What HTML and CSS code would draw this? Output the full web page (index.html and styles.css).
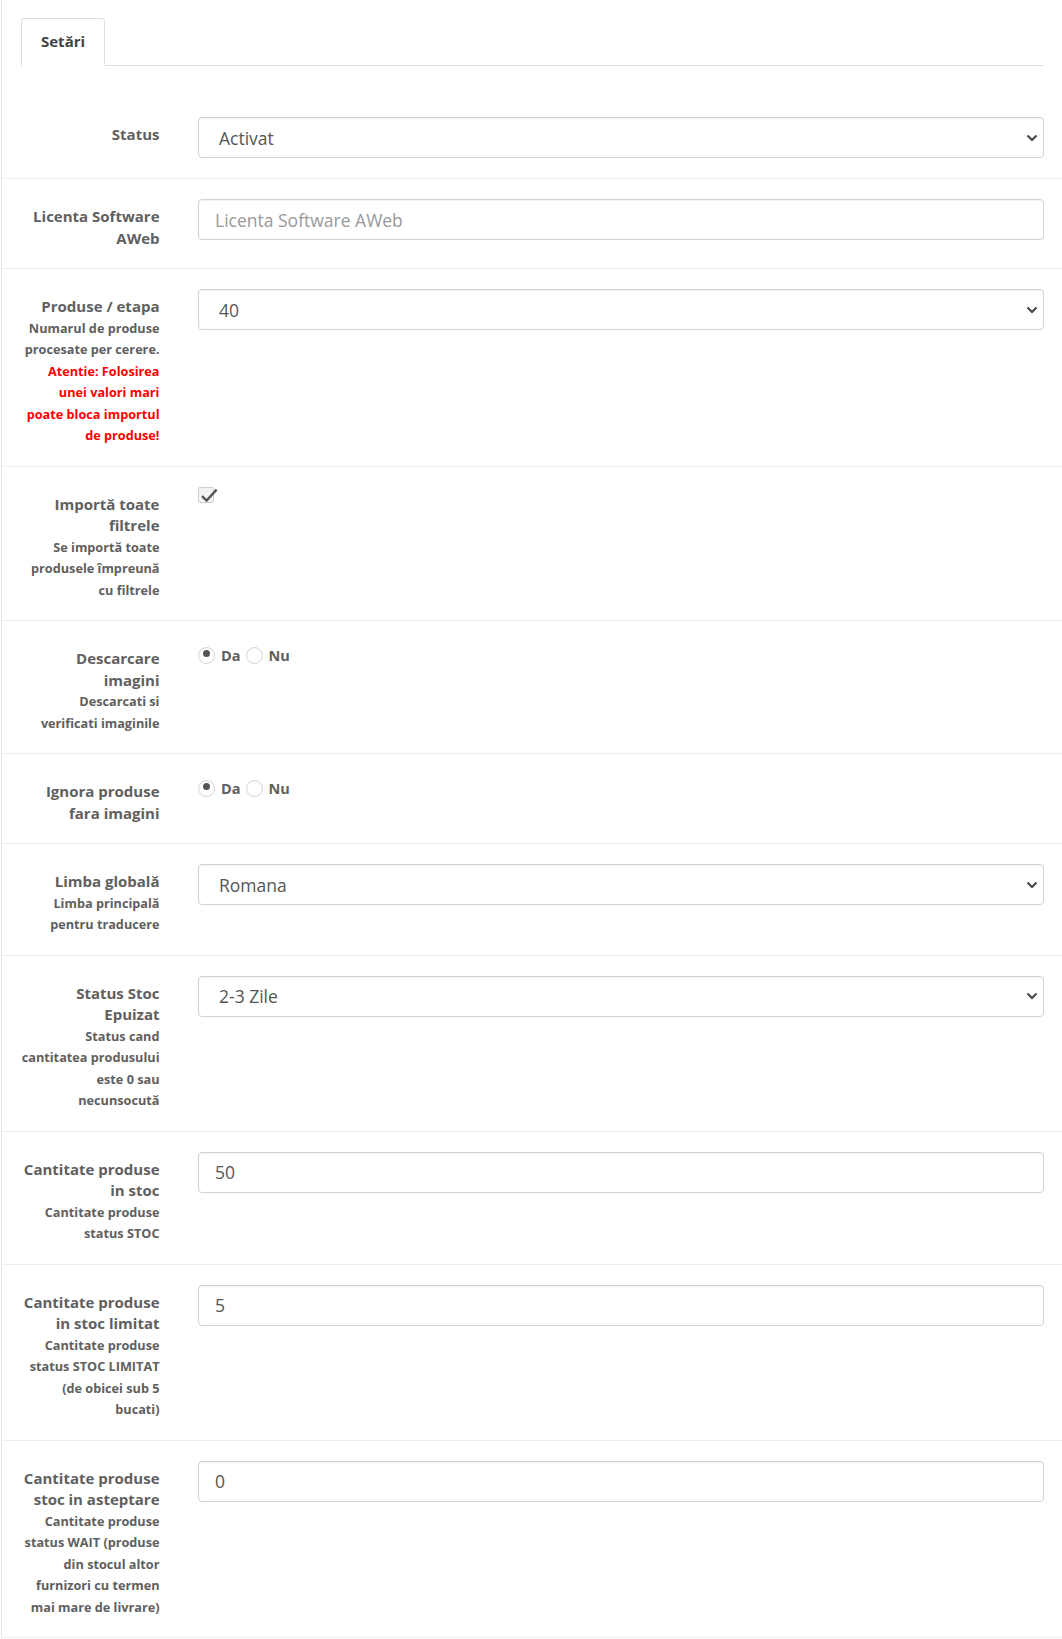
FILE: index.html
```html
<!DOCTYPE html>
<html lang="ro">
<head>
<meta charset="utf-8">
<title>Setări</title>
<link rel="stylesheet" href="styles.css">
</head>
<body>
<div class="panel">
  <ul class="tabs">
    <li class="tab">Setări</li>
  </ul>
  <form class="form">
    <div class="row">
      <label class="label"><span class="title">Status</span></label>
      <div class="field">
        <div class="select-wrap">
          <select class="control select"><option>Activat</option></select>
          <svg class="chevron" viewBox="0 0 12 8" width="12" height="8"><path d="M1.5 1.5 L6 6 L10.5 1.5"/></svg>
        </div>
      </div>
    </div>

    <div class="row">
      <label class="label"><span class="title">Licenta Software AWeb</span></label>
      <div class="field">
        <input class="control input" type="text" placeholder="Licenta Software AWeb">
      </div>
    </div>

    <div class="row">
      <label class="label">
        <span class="title">Produse / etapa</span>
        <span class="help">Numarul de produse procesate per cerere.</span>
        <span class="help warn">Atentie: Folosirea unei valori mari poate bloca importul de produse!</span>
      </label>
      <div class="field">
        <div class="select-wrap">
          <select class="control select"><option>40</option></select>
          <svg class="chevron" viewBox="0 0 12 8" width="12" height="8"><path d="M1.5 1.5 L6 6 L10.5 1.5"/></svg>
        </div>
      </div>
    </div>

    <div class="row">
      <label class="label">
        <span class="title">Importă toate filtrele</span>
        <span class="help">Se importă toate produsele împreună cu filtrele</span>
      </label>
      <div class="field">
        <span class="checkbox"><svg viewBox="0 0 20 16" width="20" height="16"><path d="M3 8.2 L7.6 12.6 L17.6 1.6"/></svg></span>
      </div>
    </div>

    <div class="row">
      <label class="label">
        <span class="title">Descarcare imagini</span>
        <span class="help">Descarcati si verificati imaginile</span>
      </label>
      <div class="field radios">
        <span class="radio-opt"><span class="radio checked"></span>Da</span>
        <span class="radio-opt"><span class="radio"></span>Nu</span>
      </div>
    </div>

    <div class="row">
      <label class="label">
        <span class="title">Ignora produse fara imagini</span>
      </label>
      <div class="field radios">
        <span class="radio-opt"><span class="radio checked"></span>Da</span>
        <span class="radio-opt"><span class="radio"></span>Nu</span>
      </div>
    </div>

    <div class="row">
      <label class="label">
        <span class="title">Limba globală</span>
        <span class="help">Limba principală pentru traducere</span>
      </label>
      <div class="field">
        <div class="select-wrap">
          <select class="control select"><option>Romana</option></select>
          <svg class="chevron" viewBox="0 0 12 8" width="12" height="8"><path d="M1.5 1.5 L6 6 L10.5 1.5"/></svg>
        </div>
      </div>
    </div>

    <div class="row">
      <label class="label">
        <span class="title">Status Stoc Epuizat</span>
        <span class="help">Status cand cantitatea produsului este 0 sau necunsocută</span>
      </label>
      <div class="field">
        <div class="select-wrap">
          <select class="control select"><option>2-3 Zile</option></select>
          <svg class="chevron" viewBox="0 0 12 8" width="12" height="8"><path d="M1.5 1.5 L6 6 L10.5 1.5"/></svg>
        </div>
      </div>
    </div>

    <div class="row">
      <label class="label">
        <span class="title">Cantitate produse in stoc</span>
        <span class="help">Cantitate produse status STOC</span>
      </label>
      <div class="field">
        <input class="control input" type="text" value="50">
      </div>
    </div>

    <div class="row">
      <label class="label">
        <span class="title">Cantitate produse in stoc limitat</span>
        <span class="help">Cantitate produse status STOC LIMITAT (de obicei sub 5 bucati)</span>
      </label>
      <div class="field">
        <input class="control input" type="text" value="5">
      </div>
    </div>

    <div class="row">
      <label class="label">
        <span class="title">Cantitate produse stoc in asteptare</span>
        <span class="help">Cantitate produse status WAIT (produse din stocul altor furnizori cu termen mai mare de livrare)</span>
      </label>
      <div class="field">
        <input class="control input" type="text" value="0">
      </div>
    </div>
  </form>
</div>
</body>
</html>
```

FILE: styles.css
```css
* {
  box-sizing: border-box;
}

html,
body {
  margin: 0;
  padding: 0;
  background: #fff;
}

body {
  font-family: "Open Sans", "Noto Sans", sans-serif;
  color: #666;
}

.panel {
  margin-left: 1px;
  border-left: 1px solid #e6e6e6;
  padding: 18px 18px 0 19px;
}

.tabs {
  list-style: none;
  margin: 0;
  padding: 0;
  display: flex;
  border-bottom: 1px solid #dedede;
}

.tab {
  margin-bottom: -1px;
  height: 48px;
  padding: 0 19px 2px;
  display: flex;
  align-items: center;
  border: 1px solid #dedede;
  border-bottom-color: #fff;
  border-radius: 3px 3px 0 0;
  background: #fff;
  font-size: 15px;
  font-weight: 700;
  color: #444;
}

.form {
  padding-top: 31px;
}

.row {
  display: grid;
  grid-template-columns: 140px 1fr;
  column-gap: 37px;
  align-items: start;
  margin: 0 -18px 0 -19px;
  padding: 20px 18px 20px 19px;
  border-top: 1px solid #ededed;
}

.row:first-child {
  border-top: none;
}

.row:last-child {
  border-bottom: 1px solid #ededed;
}

.label {
  display: block;
  margin-right: 1.5px;
  padding-top: 7px;
  margin-bottom: -1px;
  text-align: right;
  font-weight: 700;
  color: #606060;
}

.title {
  display: block;
  font-size: 15px;
  line-height: 21.5px;
}

.help {
  display: block;
  font-size: 12.7px;
  line-height: 21.5px;
}

.warn {
  color: #f00;
}

.field {
  min-width: 0;
}

.control {
  display: block;
  width: 100%;
  height: 41px;
  margin: 0;
  border: 1px solid #d2d2d2;
  border-radius: 4px;
  background: #fff;
  box-shadow: inset 0 1px 1px rgba(0, 0, 0, 0.05);
  font-family: "Open Sans", "Noto Sans", sans-serif;
  font-size: 17.5px;
  color: #555;
  padding: 0 16px;
  outline: none;
}

.input::placeholder {
  color: #999;
}

.select-wrap {
  position: relative;
}

.select {
  -webkit-appearance: none;
  appearance: none;
  padding-left: 20px;
  padding-right: 30px;
}

.chevron {
  position: absolute;
  right: 6px;
  top: 50%;
  transform: translateY(-50%);
  pointer-events: none;
}

.chevron path {
  fill: none;
  stroke: #444;
  stroke-width: 2;
}

.checkbox {
  position: relative;
  display: block;
  width: 16px;
  height: 16px;
  border: 1px solid #cfcfcf;
  border-radius: 2px;
  background: #f3f3f3;
}

.checkbox svg {
  position: absolute;
  left: 0;
  top: 0;
  overflow: visible;
}

.checkbox path {
  fill: none;
  stroke: #555;
  stroke-width: 2.4;
}

.radios {
  display: flex;
  align-items: center;
  gap: 5px;
  padding-top: 5px;
  font-size: 14.5px;
  font-weight: 700;
  color: #606060;
}

.radio-opt {
  display: flex;
  align-items: center;
  gap: 6px;
  line-height: 17px;
}

.radio-opt:first-child {
  padding-top: 1px;
}

.radio {
  position: relative;
  width: 17px;
  height: 17px;
  border: 1px solid #d4d4d4;
  border-radius: 50%;
  background: #fff;
  box-shadow: inset 0 1px 1px rgba(0, 0, 0, 0.04);
}

.radio.checked::after {
  content: "";
  position: absolute;
  left: 4px;
  top: 2px;
  width: 7px;
  height: 7px;
  border-radius: 50%;
  background: #555;
}
```
